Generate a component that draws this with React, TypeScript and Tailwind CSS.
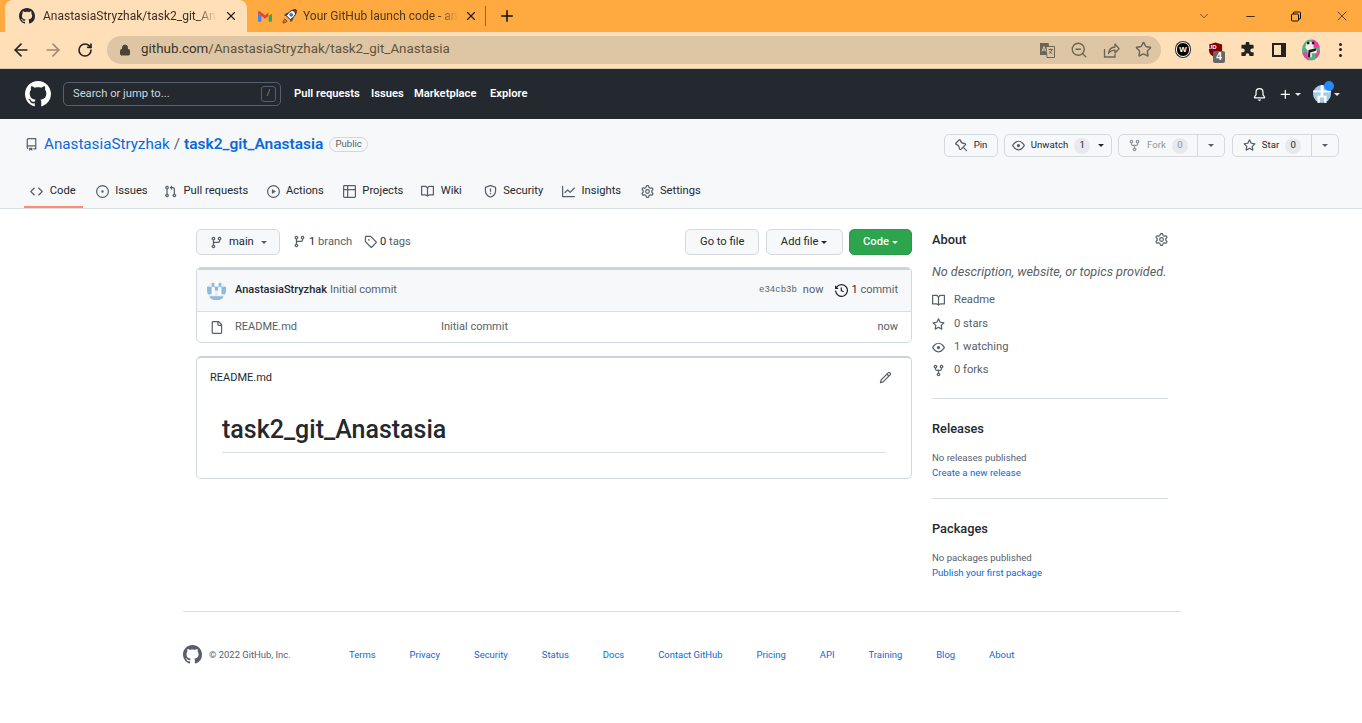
import { ArrowLeft, ArrowRight, RotateCw, Lock, ZoomOut, Star, ChevronDown, Minus, X, Plus } from "lucide-react";

const P: Record<string, string> = {
  github: "M8 0C3.58 0 0 3.58 0 8c0 3.54 2.29 6.53 5.47 7.59.4.07.55-.17.55-.38 0-.19-.01-.82-.01-1.49-2.01.37-2.53-.49-2.69-.94-.09-.23-.48-.94-.82-1.13-.28-.15-.68-.52-.01-.53.63-.01 1.08.58 1.23.82.72 1.21 1.87.87 2.33.66.07-.52.28-.87.51-1.07-1.78-.2-3.64-.89-3.64-3.95 0-.87.31-1.59.82-2.15-.08-.2-.36-1.02.08-2.12 0 0 .67-.21 2.2.82.64-.18 1.32-.27 2-.27.68 0 1.36.09 2 .27 1.53-1.04 2.2-.82 2.2-.82.44 1.1.16 1.92.08 2.12.51.56.82 1.27.82 2.15 0 3.07-1.87 3.75-3.65 3.95.29.25.54.73.54 1.48 0 1.07-.01 1.93-.01 2.2 0 .21.15.46.55.38A8.013 8.013 0 0016 8c0-4.42-3.58-8-8-8z",
  code: "m11.28 3.22 4.25 4.25a.75.75 0 0 1 0 1.06l-4.25 4.25a.749.749 0 0 1-1.275-.326.749.749 0 0 1 .215-.734L13.94 8l-3.72-3.72a.749.749 0 0 1 .326-1.275.749.749 0 0 1 .734.215Zm-6.56 0a.751.751 0 0 1 1.042.018.751.751 0 0 1 .018 1.042L2.06 8l3.72 3.72a.749.749 0 0 1-.326 1.275.749.749 0 0 1-.734-.215L.47 8.53a.75.75 0 0 1 0-1.06Z",
  issue: "M8 9.5a1.5 1.5 0 1 0 0-3 1.5 1.5 0 0 0 0 3ZM8 0a8 8 0 1 1 0 16A8 8 0 0 1 8 0ZM1.5 8a6.5 6.5 0 1 0 13 0 6.5 6.5 0 0 0-13 0Z",
  pull: "M1.5 3.25a2.25 2.25 0 1 1 3 2.122v5.256a2.251 2.251 0 1 1-1.5 0V5.372A2.25 2.25 0 0 1 1.5 3.25Zm5.677-.177L9.573.677A.25.25 0 0 1 10 .854V2.5h1A2.5 2.5 0 0 1 13.5 5v5.628a2.251 2.251 0 1 1-1.5 0V5a1 1 0 0 0-1-1h-1v1.646a.25.25 0 0 1-.427.177L7.177 3.427a.25.25 0 0 1 0-.354ZM3.75 2.5a.75.75 0 1 0 0 1.5.75.75 0 0 0 0-1.5Zm0 9.5a.75.75 0 1 0 0 1.5.75.75 0 0 0 0-1.5Zm8.25.75a.75.75 0 1 0 1.5 0 .75.75 0 0 0-1.5 0Z",
  play: "M8 0a8 8 0 1 1 0 16A8 8 0 0 1 8 0ZM1.5 8a6.5 6.5 0 1 0 13 0 6.5 6.5 0 0 0-13 0Zm4.879-2.773 4.264 2.559a.25.25 0 0 1 0 .428l-4.264 2.559A.25.25 0 0 1 6 10.559V5.442a.25.25 0 0 1 .379-.215Z",
  table: "M0 1.75C0 .784.784 0 1.75 0h12.5C15.216 0 16 .784 16 1.75v12.5A1.75 1.75 0 0 1 14.25 16H1.75A1.75 1.75 0 0 1 0 14.25ZM6.5 6.5v8h7.75a.25.25 0 0 0 .25-.25V6.5Zm8-1.5V1.75a.25.25 0 0 0-.25-.25H6.5V5Zm-13 1.5v7.75c0 .138.112.25.25.25H5v-8ZM5 5V1.5H1.75a.25.25 0 0 0-.25.25V5Z",
  book: "M0 1.75A.75.75 0 0 1 .75 1h4.253c1.227 0 2.317.59 3 1.501A3.743 3.743 0 0 1 11.006 1h4.245a.75.75 0 0 1 .75.75v10.5a.75.75 0 0 1-.75.75h-4.507a2.25 2.25 0 0 0-1.591.659l-.622.621a.75.75 0 0 1-1.06 0l-.622-.621A2.25 2.25 0 0 0 5.258 13H.75a.75.75 0 0 1-.75-.75Zm7.251 10.324.004-5.073-.002-2.253A2.25 2.25 0 0 0 5.003 2.5H1.5v9h3.757a3.75 3.75 0 0 1 1.994.574ZM8.755 4.75l-.004 7.322a3.752 3.752 0 0 1 1.992-.572H14.5v-9h-3.495a2.25 2.25 0 0 0-2.25 2.25Z",
  shield: "M7.467.133a1.748 1.748 0 0 1 1.066 0l5.25 1.68A1.75 1.75 0 0 1 15 3.48V7c0 1.566-.32 3.182-1.303 4.682-.983 1.498-2.585 2.813-5.032 3.855a1.697 1.697 0 0 1-1.33 0c-2.447-1.042-4.049-2.357-5.032-3.855C1.32 10.182 1 8.566 1 7V3.48a1.75 1.75 0 0 1 1.217-1.667Zm.61 1.429a.25.25 0 0 0-.153 0l-5.25 1.68a.25.25 0 0 0-.174.238V7c0 1.358.275 2.666 1.057 3.86.784 1.194 2.121 2.34 4.366 3.297a.196.196 0 0 0 .154 0c2.245-.956 3.582-2.104 4.366-3.298C13.225 9.666 13.5 8.36 13.5 7V3.48a.251.251 0 0 0-.174-.237l-5.25-1.68ZM8.75 4.75v3a.75.75 0 0 1-1.5 0v-3a.75.75 0 0 1 1.5 0ZM9 10.5a1 1 0 1 1-2 0 1 1 0 0 1 2 0Z",
  graph: "M1.5 1.75V13.5h13.75a.75.75 0 0 1 0 1.5H.75a.75.75 0 0 1-.75-.75V1.75a.75.75 0 0 1 1.5 0Zm14.28 2.53-5.25 5.25a.75.75 0 0 1-1.06 0L7 7.06 4.28 9.78a.751.751 0 0 1-1.042-.018.751.751 0 0 1-.018-1.042l3.25-3.25a.75.75 0 0 1 1.06 0L10 7.94l4.72-4.72a.751.751 0 0 1 1.042.018.751.751 0 0 1 .018 1.042Z",
  gear: "M8 0a8.2 8.2 0 0 1 .701.031C9.444.095 9.99.645 10.16 1.29l.288 1.107c.018.066.079.158.212.224.231.114.454.243.668.386.123.082.233.09.299.071l1.103-.303c.644-.176 1.392.021 1.82.63.27.385.506.792.704 1.218.315.675.111 1.422-.364 1.891l-.814.806c-.049.048-.098.147-.088.294.016.257.016.515 0 .772-.01.147.038.246.088.294l.814.806c.475.469.679 1.216.364 1.891a7.977 7.977 0 0 1-.704 1.217c-.428.61-1.176.807-1.82.63l-1.102-.302c-.067-.019-.177-.011-.3.071a5.909 5.909 0 0 1-.668.386c-.133.066-.194.158-.211.224l-.29 1.106c-.168.646-.715 1.196-1.458 1.26a8.006 8.006 0 0 1-1.402 0c-.743-.064-1.289-.614-1.458-1.26l-.289-1.106c-.018-.066-.079-.158-.212-.224a5.738 5.738 0 0 1-.668-.386c-.123-.082-.233-.09-.299-.071l-1.103.303c-.644.176-1.392-.021-1.82-.63a8.12 8.12 0 0 1-.704-1.218c-.315-.675-.111-1.422.363-1.891l.815-.806c.05-.048.098-.147.088-.294a6.214 6.214 0 0 1 0-.772c.01-.147-.038-.246-.088-.294l-.815-.806C.635 6.045.431 5.298.746 4.623a7.92 7.92 0 0 1 .704-1.217c.428-.61 1.176-.807 1.82-.63l1.102.302c.067.019.177.011.3-.071.214-.143.437-.272.668-.386.133-.066.194-.158.211-.224l.29-1.106C6.009.645 6.556.095 7.299.03 7.53.01 7.764 0 8 0Zm-.571 1.525c-.036.003-.108.036-.137.146l-.289 1.105c-.147.561-.549.967-.998 1.189-.173.086-.34.183-.5.29-.417.278-.97.423-1.529.27l-1.103-.303c-.109-.03-.175.016-.195.045-.22.312-.412.644-.573.99-.014.031-.021.11.059.19l.815.806c.411.406.562.957.53 1.456a4.709 4.709 0 0 0 0 .582c.032.499-.119 1.05-.53 1.456l-.815.806c-.081.08-.073.159-.059.19.162.346.353.677.573.989.02.03.085.076.195.046l1.102-.303c.56-.153 1.113-.008 1.53.27.161.107.328.204.501.29.447.222.85.629.997 1.189l.289 1.105c.029.109.101.143.137.146a6.6 6.6 0 0 0 1.142 0c.036-.003.108-.036.137-.146l.289-1.105c.147-.561.549-.967.998-1.189.173-.086.34-.183.5-.29.417-.278.97-.423 1.529-.27l1.103.303c.109.029.175-.016.195-.045.22-.313.411-.644.573-.99.014-.031.021-.11-.059-.19l-.815-.806c-.411-.406-.562-.957-.53-1.456a4.709 4.709 0 0 0 0-.582c-.032-.499.119-1.05.53-1.456l.815-.806c.081-.08.073-.159.059-.19a6.464 6.464 0 0 0-.573-.989c-.02-.03-.085-.076-.195-.046l-1.102.303c-.56.153-1.113.008-1.53-.27a4.44 4.44 0 0 0-.501-.29c-.447-.222-.85-.629-.997-1.189l-.289-1.105c-.029-.11-.101-.143-.137-.146a6.6 6.6 0 0 0-1.142 0ZM11 8a3 3 0 1 1-6 0 3 3 0 0 1 6 0ZM9.5 8a1.5 1.5 0 1 0-3.001.001A1.5 1.5 0 0 0 9.5 8Z",
  repo: "M2 2.5A2.5 2.5 0 0 1 4.5 0h8.75a.75.75 0 0 1 .75.75v12.5a.75.75 0 0 1-.75.75h-2.5a.75.75 0 0 1 0-1.5h1.75v-2h-8a1 1 0 0 0-.714 1.7.75.75 0 1 1-1.072 1.05A2.495 2.495 0 0 1 2 11.5Zm10.5-1h-8a1 1 0 0 0-1 1v6.708A2.486 2.486 0 0 1 4.5 9h8ZM5 12.25a.25.25 0 0 1 .25-.25h3.5a.25.25 0 0 1 .25.25v3.25a.25.25 0 0 1-.4.2l-1.45-1.087a.249.249 0 0 0-.3 0L5.4 15.7a.25.25 0 0 1-.4-.2Z",
  pin: "M4.456.734a1.75 1.75 0 012.826.504l.613 1.327a3.081 3.081 0 002.084 1.707l2.454.584c1.332.317 1.8 1.972.832 2.94L11.06 10l3.72 3.72a.75.75 0 11-1.061 1.06L10 11.06l-2.204 2.205c-.968.968-2.623.5-2.94-.832l-.584-2.454a3.081 3.081 0 00-1.707-2.084l-1.327-.613a1.75 1.75 0 01-.504-2.826L4.456.734zM5.92 1.866a.25.25 0 00-.404-.072L1.794 5.516a.25.25 0 00.072.404l1.328.613A4.582 4.582 0 015.73 9.63l.584 2.454a.25.25 0 00.42.12l5.47-5.47a.25.25 0 00-.12-.42L9.63 6.13a4.581 4.581 0 01-3.098-2.537L5.92 1.866z",
  eye: "M8 2c1.981 0 3.671.992 4.933 2.078 1.27 1.091 2.187 2.345 2.637 3.023a1.62 1.62 0 0 1 0 1.798c-.45.678-1.367 1.932-2.637 3.023C11.67 13.008 9.981 14 8 14c-1.981 0-3.671-.992-4.933-2.078C1.797 10.83.88 9.576.43 8.898a1.62 1.62 0 0 1 0-1.798c.45-.677 1.367-1.931 2.637-3.022C4.33 2.992 6.019 2 8 2ZM1.679 7.932a.12.12 0 0 0 0 .136c.411.622 1.241 1.75 2.366 2.717C5.176 11.758 6.527 12.5 8 12.5c1.473 0 2.825-.742 3.955-1.715 1.124-.967 1.954-2.096 2.366-2.717a.12.12 0 0 0 0-.136c-.412-.621-1.242-1.75-2.366-2.717C10.824 4.242 9.473 3.5 8 3.5c-1.473 0-2.825.742-3.955 1.715-1.124.967-1.954 2.096-2.366 2.717ZM8 10a2 2 0 1 1-.001-3.999A2 2 0 0 1 8 10Z",
  fork: "M5 5.372v.878c0 .414.336.75.75.75h4.5a.75.75 0 0 0 .75-.75v-.878a2.25 2.25 0 1 1 1.5 0v.878a2.25 2.25 0 0 1-2.25 2.25h-1.5v2.128a2.251 2.251 0 1 1-1.5 0V8.5h-1.5A2.25 2.25 0 0 1 3.5 6.25v-.878a2.25 2.25 0 1 1 1.5 0ZM5 3.25a.75.75 0 1 0-1.5 0 .75.75 0 0 0 1.5 0Zm6.75.75a.75.75 0 1 0 0-1.5.75.75 0 0 0 0 1.5Zm-3 8.75a.75.75 0 1 0-1.5 0 .75.75 0 0 0 1.5 0Z",
  star: "M8 .25a.75.75 0 0 1 .673.418l1.882 3.815 4.21.612a.75.75 0 0 1 .416 1.279l-3.046 2.97.719 4.192a.751.751 0 0 1-1.088.791L8 12.347l-3.766 1.98a.75.75 0 0 1-1.088-.79l.72-4.194L.818 6.374a.75.75 0 0 1 .416-1.28l4.21-.611L7.327.668A.75.75 0 0 1 8 .25Zm0 2.445L6.615 5.5a.75.75 0 0 1-.564.41l-3.097.45 2.24 2.184a.75.75 0 0 1 .216.664l-.528 3.084 2.769-1.456a.75.75 0 0 1 .698 0l2.77 1.456-.53-3.084a.75.75 0 0 1 .216-.664l2.24-2.183-3.096-.45a.75.75 0 0 1-.564-.41L8 2.694Z",
  branch: "M9.5 3.25a2.25 2.25 0 1 1 3 2.122V6A2.5 2.5 0 0 1 10 8.5H6a1 1 0 0 0-1 1v1.128a2.251 2.251 0 1 1-1.5 0V5.372a2.25 2.25 0 1 1 1.5 0v1.836A2.493 2.493 0 0 1 6 7h4a1 1 0 0 0 1-1v-.628A2.25 2.25 0 0 1 9.5 3.25Zm-6 0a.75.75 0 1 0 1.5 0 .75.75 0 0 0-1.5 0Zm8.25-.75a.75.75 0 1 0 0 1.5.75.75 0 0 0 0-1.5ZM4.25 12a.75.75 0 1 0 0 1.5.75.75 0 0 0 0-1.5Z",
  tag: "M1 7.775V2.75C1 1.784 1.784 1 2.75 1h5.025c.464 0 .91.184 1.238.513l6.25 6.25a1.75 1.75 0 0 1 0 2.474l-5.026 5.026a1.75 1.75 0 0 1-2.474 0l-6.25-6.25A1.752 1.752 0 0 1 1 7.775Zm1.5 0c0 .066.026.13.073.177l6.25 6.25a.25.25 0 0 0 .354 0l5.025-5.025a.25.25 0 0 0 0-.354l-6.25-6.25a.25.25 0 0 0-.177-.073H2.75a.25.25 0 0 0-.25.25ZM6 5a1 1 0 1 1 0 2 1 1 0 0 1 0-2Z",
  history: "m.427 1.927 1.215 1.215a8.002 8.002 0 1 1-1.6 5.685.75.75 0 1 1 1.493-.154 6.5 6.5 0 1 0 1.18-4.458l1.358 1.358A.25.25 0 0 1 3.896 6H.25A.25.25 0 0 1 0 5.75V2.104a.25.25 0 0 1 .427-.177ZM7.75 4a.75.75 0 0 1 .75.75v2.992l2.028.812a.75.75 0 0 1-.557 1.392l-2.5-1A.751.751 0 0 1 7 8.25v-3.5A.75.75 0 0 1 7.75 4Z",
  file: "M2 1.75C2 .784 2.784 0 3.75 0h6.586c.464 0 .909.184 1.237.513l2.914 2.914c.329.328.513.773.513 1.237v9.586A1.75 1.75 0 0 1 13.25 16h-9.5A1.75 1.75 0 0 1 2 14.25Zm1.75-.25a.25.25 0 0 0-.25.25v12.5c0 .138.112.25.25.25h9.5a.25.25 0 0 0 .25-.25V6h-2.75A1.75 1.75 0 0 1 9 4.25V1.5Zm6.75.062V4.25c0 .138.112.25.25.25h2.688l-.011-.013-2.914-2.914-.013-.011Z",
  pencil: "M11.013 1.427a1.75 1.75 0 0 1 2.474 0l1.086 1.086a1.75 1.75 0 0 1 0 2.474l-8.61 8.61c-.21.21-.47.364-.756.445l-3.251.93a.75.75 0 0 1-.927-.928l.929-3.25c.081-.286.235-.547.445-.758l8.61-8.61Zm.176 4.823L9.75 4.81l-6.286 6.287a.253.253 0 0 0-.064.108l-.558 1.953 1.953-.558a.253.253 0 0 0 .108-.064Zm1.238-3.763a.25.25 0 0 0-.354 0L10.811 3.75l1.439 1.44 1.263-1.263a.25.25 0 0 0 0-.354Z",
  bell: "M8 16a2 2 0 0 0 1.985-1.75c.017-.137-.097-.25-.235-.25h-3.5c-.138 0-.252.113-.235.25A2 2 0 0 0 8 16ZM3 5a5 5 0 0 1 10 0v2.947c0 .05.015.098.042.139l1.703 2.555A1.519 1.519 0 0 1 13.482 13H2.518a1.516 1.516 0 0 1-1.263-2.36l1.703-2.554A.255.255 0 0 0 3 7.947Zm5-3.5A3.5 3.5 0 0 0 4.5 5v2.947c0 .346-.102.683-.294.97l-1.703 2.556a.017.017 0 0 0-.003.01l.001.006c0 .002.002.004.004.006l.006.004.007.001h10.964l.007-.001.006-.004.004-.006.001-.007a.017.017 0 0 0-.003-.01l-1.703-2.554a1.745 1.745 0 0 1-.294-.97V5A3.5 3.5 0 0 0 8 1.5Z",
  plus: "M7.75 2a.75.75 0 0 1 .75.75V7h4.25a.75.75 0 0 1 0 1.5H8.5v4.25a.75.75 0 0 1-1.5 0V8.5H2.75a.75.75 0 0 1 0-1.5H7V2.75A.75.75 0 0 1 7.75 2Z",
};

function Oct({ name, className = "w-[13px] h-[13px]" }: { name: string; className?: string }) {
  return (
    <svg viewBox="0 0 16 16" fill="currentColor" fillRule="evenodd" className={`shrink-0 ${className}`}>
      <path d={P[name]} />
    </svg>
  );
}

function Caret({ className = "" }: { className?: string }) {
  return <span className={`inline-block w-0 h-0 border-x-[3.2px] border-x-transparent border-t-[3.2px] border-t-current ${className}`} />;
}

// commit avatar
function Identicon({ className }: { className: string }) {
  return (
    <svg viewBox="0 0 20 20" className={className}>
      <circle cx="10" cy="10" r="10" fill="#e8eff5" />
      <path fill="#8dbbdf" d="M0 6h5v8H1A10 10 0 0 1 0 10ZM15 6h5v4a10 10 0 0 1-1 4h-4ZM5 2h3v4H5ZM12 2h3v4h-3ZM8 6h4v4H8ZM3 16h14v1.500A10 10 0 0 1 3 17.500Z" />
      <path fill="#ffffff" d="M8 0h4v5H8ZM5 7h3v8H5ZM12 7h3v8h-3Z" />
    </svg>
  );
}

function UserAvatar() {
  return (
    <svg viewBox="0 0 20 20" className="w-[18px] h-[18px]">
      <circle cx="10" cy="10" r="10" fill="#a5cdea" />
      <path fill="#ffffff" d="M8.500 0h3v6H20v2h-8.500v4H15v8h-2.500v-6h-5v6H5v-8h3.500V8H0V6h8.500Z" />
    </svg>
  );
}

function GmailIcon() {
  return (
    <svg viewBox="0 0 16 12" className="w-[14px] h-[11px] shrink-0">
      <path fill="#4285f4" d="M0 2.500V11a1 1 0 0 0 1 1h2.800V5Z" />
      <path fill="#34a853" d="M16 2.500V11a1 1 0 0 1-1 1h-2.800V5Z" />
      <path fill="#ea4335" d="M3.800 5.200 0 2.500V1.500C0 .2 1.400-.4 2.400.3L8 4.700 12.200 1.500V5.200L8 8.500Z" />
      <path fill="#fbbc04" d="M12.200 1.500 13.600.3C14.600-.4 16 .2 16 1.500v1L12.200 5.200Z" />
    </svg>
  );
}

function RocketIcon() {
  return (
    <svg viewBox="0 0 16 16" className="w-[15px] h-[15px] shrink-0">
      <path fill="#d9791a" stroke="#4a2a10" strokeWidth="0.6" d="M1 15c0-2 .7-3.500 2-4.500l2.500 2.500C4.500 14.300 3 15 1 15Z" />
      <path fill="#ffffff" stroke="#111" strokeWidth="1" d="M15 1c.3 3.500-1 6.500-3.800 8.600L9 11.500 4.500 7l1.900-2.200C8.500 2 11.500.7 15 1Z" />
      <path fill="#e03131" stroke="#111" strokeWidth="0.6" d="M15 1c.1 1.300 0 2.500-.4 3.600L11.400 1.400C12.500 1 13.700.9 15 1Z" />
      <circle cx="9.800" cy="6.200" r="1.600" fill="#2f9be8" stroke="#111" strokeWidth="0.5" />
      <path fill="#2f6fc4" stroke="#111" strokeWidth="0.5" d="M4.500 7 2.500 6.500 5 4.500h1.500ZM9 11.500l.5 2 2-2.500v-1.500Z" />
    </svg>
  );
}

function Tabstrip() {
  return (
    <div className="h-8 bg-[#ffaa40] flex items-stretch text-[12px] text-[#3b2f20]">
      <div className="ml-[5px] w-[242px] bg-[#ffdfb8] rounded-t-lg flex items-center pl-[14px] pr-[9px]">
        <Oct name="github" className="w-[16px] h-[16px] text-[#24292f]" />
        <span className="ml-[8px] w-[174px] overflow-hidden whitespace-nowrap [mask-image:linear-gradient(to_right,black_88%,transparent)]">AnastasiaStryzhak/task2_git_Anastasia</span>
        <X className="ml-auto w-[14px] h-[14px] text-[#222]" strokeWidth={2} />
      </div>
      <div className="w-[239px] flex items-center pl-[11px]">
        <GmailIcon />
        <span className="ml-[10px]"><RocketIcon /></span>
        <span className="ml-[6px] w-[155px] overflow-hidden whitespace-nowrap text-[#4a3a20] [mask-image:linear-gradient(to_right,black_88%,transparent)]">Your GitHub launch code - and more</span>
        <X className="ml-[6px] w-[14px] h-[14px] text-[#222]" strokeWidth={2} />
        <div className="ml-auto w-px h-[20px] bg-[#8a6a30]" />
      </div>
      <div className="ml-[12px] flex items-center">
        <Plus className="w-[18px] h-[18px] text-[#111]" strokeWidth={2} />
      </div>
      <div className="ml-auto flex items-center text-[#111]">
        <span className="w-[46px] flex justify-center"><ChevronDown className="w-[14px] h-[14px]" strokeWidth={1} /></span>
        <span className="w-[46px] flex justify-center"><Minus className="w-[13px] h-[13px]" strokeWidth={1.5} /></span>
        <span className="w-[46px] flex justify-center">
          <svg viewBox="0 0 10 10" className="w-[10px] h-[11px]" fill="none" stroke="#111" strokeWidth="1">
            <rect x="0.5" y="2.500" width="7" height="7" rx="1" />
            <path d="M2.500 2.500V1.300a.8.8 0 0 1 .8-.8H8.700a.8.8 0 0 1 .8.8V7a.5.5 0 0 1-.5.5H7.500" />
          </svg>
        </span>
        <span className="w-[43px] flex justify-center pl-[3px]"><X className="w-[16px] h-[16px]" strokeWidth={1} /></span>
      </div>
    </div>
  );
}

function Toolbar() {
  return (
    <div className="h-[37px] bg-[#ffdfb8] border-b border-[#d8c3a5] flex items-center pb-[1px]">
      <div className="w-[107px] flex items-center pl-[11px] gap-[12px]">
        <ArrowLeft className="w-[20px] h-[20px] text-[#222]" strokeWidth={2} />
        <ArrowRight className="w-[20px] h-[20px] text-[#9c8a75]" strokeWidth={2} />
        <span className="w-[20px] flex justify-center"><RotateCw className="w-[16px] h-[16px] text-[#222]" strokeWidth={2.4} /></span>
      </div>
      <div className="w-[1054px] h-[28px] rounded-full bg-[#dec6a4] flex items-center pl-[12px] pr-[9px]">
        <Lock className="w-[12px] h-[12px] text-[#4b4438] fill-[#4b4438]" strokeWidth={2} />
        <span className="ml-[10px] text-[13.4px] text-[#3b3327] whitespace-nowrap">github.com<span className="text-[#5f5340]">/AnastasiaStryzhak/task2_git_Anastasia</span></span>
        <div className="ml-auto flex items-center gap-[14px] text-[#6b6458]">
          <svg viewBox="0 0 18 18" className="w-[18px] h-[18px]">
            <path fill="#6b6458" d="M2 2h8.500l.5 2v10H2Z" />
            <path fill="#dec6a4" stroke="#6b6458" strokeWidth="1" d="M8 5.500h8.500v11H9Z" />
            <path fill="none" stroke="#6b6458" strokeWidth="1" d="M10.500 8.500h4.500M12.700 7.500v1M14 8.500c-.5 2-2 3.500-3 4M11.500 10c.5 1 2 2.500 3 3" />
            <path fill="none" stroke="#dec6a4" strokeWidth="1" d="M4 10.500l2-5 2 5M4.700 9h2.600" />
          </svg>
          <ZoomOut className="w-[18px] h-[18px]" strokeWidth={1.8} />
          <svg viewBox="0 0 18 18" className="w-[18px] h-[18px]" fill="none" stroke="#6b6458" strokeWidth="1.300">
            <path d="M2.500 8v8h10.500v-3" />
            <path strokeLinejoin="round" d="M6.500 12.500c.4-4 3-6.300 6.500-6.500V3l4 4.700-4 4.300V9.200c-3 0-5 1-6.500 3.300Z" />
          </svg>
          <span className="w-[18px] flex justify-center"><Star className="w-[17px] h-[17px]" strokeWidth={2} /></span>
        </div>
      </div>
      <div className="ml-[13px] flex items-center gap-[14px]">
        <span className="w-[18px] h-[18px] flex items-center justify-center">
          <span className="w-[14px] h-[15px] rounded-full bg-black border border-white ring-1 ring-[#333] flex items-center justify-center text-white text-[8px] font-bold font-['Liberation_Sans',sans-serif]">W</span>
        </span>
        <span className="w-[18px] h-[18px] relative flex items-center justify-center">
          <svg viewBox="0 0 16 16" className="w-[15px] h-[16px]"><path fill="#800000" d="M8 0l7 2v6c0 4-3 6.500-7 8-4-1.500-7-4-7-8V2Z" /></svg>
          <span className="absolute left-[2px] top-[3px] text-[6px] leading-none text-white font-bold font-['Liberation_Sans',sans-serif]">UD</span>
          <span className="absolute left-[7px] top-[10px] w-[12px] h-[12px] bg-[#666] rounded-[2px] text-white text-[10px] leading-[12px] text-center font-bold font-['Liberation_Sans',sans-serif]">4</span>
        </span>
        <svg viewBox="0 0 16 16" className="w-[15px] h-[15px] mx-[1.500px]"><path fill="#222" d="M6 1.500a2 2 0 0 1 4 0V3h3.500a1 1 0 0 1 1 1v3H13a2 2 0 0 0 0 4h1.500v3a1 1 0 0 1-1 1H10v-1a2 2 0 0 0-4 0v1H2.500a1 1 0 0 1-1-1v-3H3a2 2 0 0 0 0-4H1.500V4a1 1 0 0 1 1-1H6Z" /></svg>
        <span className="w-[18px] h-[18px] flex items-center justify-center">
          <span className="w-[14px] h-[14px] bg-[#222] flex justify-start p-[2px]"><span className="w-[7px] h-full bg-[#ffdfb8]" /></span>
        </span>
        <svg viewBox="0 0 22 26" className="w-[18px] h-[22px]">
          <defs><clipPath id="pc"><ellipse cx="11" cy="13" rx="11" ry="13" /></clipPath></defs>
          <g clipPath="url(#pc)">
            <rect width="22" height="26" fill="#4fb286" />
            <path fill="#ee3fa0" d="M12 0h10v10H14ZM16 14h6v8h-6ZM0 16h8v10H0Z" />
            <path fill="#f3efe6" d="M6 3h8v7l4 3v4H12v5H7v-8L4 10Z" />
            <path fill="#1c1c1c" d="M6 3h3v3H6ZM12 3h3v3h-3ZM8 13l9-2v3l-7 2v6H7Z" />
          </g>
        </svg>
        <span className="w-[16px] -ml-[2px] flex flex-col items-center gap-[2.500px]">
          <span className="w-[3px] h-[3px] rounded-full bg-[#222]" />
          <span className="w-[3px] h-[3px] rounded-full bg-[#222]" />
          <span className="w-[3px] h-[3px] rounded-full bg-[#222]" />
        </span>
      </div>
    </div>
  );
}

function GhHeader() {
  return (
    <div className="h-[50px] bg-[#24292f] flex items-center text-white pl-[25px] text-[11.2px] font-semibold">
      <Oct name="github" className="w-[26px] h-[26px]" />
      <div className="ml-[12px] w-[218px] h-[24px] border border-[#57606a] rounded-[5px] flex items-center pl-[9px] pr-[4px] text-[#d0d7de] font-normal">
        <span className="pt-px">Search or jump to...</span>
        <span className="ml-auto w-[15px] h-[16px] border border-[#57606a] rounded-[3px] text-[9px] text-[#8b949e] flex items-center justify-center">/</span>
      </div>
      <nav className="ml-[13px] flex pt-px">
        <span className="w-[77px]">Pull requests</span>
        <span className="w-[43px]">Issues</span>
        <span className="w-[76px]">Marketplace</span>
        <span>Explore</span>
      </nav>
      <div className="ml-auto flex items-center pr-[22px]">
        <Oct name="bell" className="w-[13px] h-[13px]" />
        <Oct name="plus" className="ml-[13px] w-[13px] h-[13px]" />
        <Caret className="ml-[3px] text-[#e6e6e6]" />
        <div className="ml-[12px] relative w-[18px] h-[18px]">
          <UserAvatar />
          <span className="absolute -top-[4px] left-[11px] w-[10px] h-[10px] rounded-full bg-[#218bff]" />
        </div>
        <Caret className="ml-[3px] text-[#e6e6e6]" />
      </div>
    </div>
  );
}

function ActionBtn({ icon, label, count, muted, w, split }: { icon: string; label: string; count?: string; muted?: boolean; w: string; split?: boolean }) {
  return (
    <div className={`h-[23px] flex items-center bg-[#f6f8fa] border border-[#d5d9dd] rounded-[5px] text-[9.6px] ${w} ${muted ? "text-[#8c959f]" : "text-[#24292f]"}`}>
      <div className="flex-1 flex items-center justify-center gap-[6px] h-full">
        <Oct name={icon} className={`w-[13px] h-[13px] ${muted ? "text-[#8c959f]" : "text-[#57606a]"}`} />
        <span className="flex items-center">{label}</span>
        {count && <span className={`w-[16px] h-[16px] rounded-full bg-[#e7e9ec] flex items-center justify-center ${muted ? "text-[#8c959f]" : ""}`}>{count}</span>}
        {label === "Unwatch" && <Caret className="ml-[2px]" />}
      </div>
      {split && (
        <div className="w-[27px] h-full border-l border-[#d5d9dd] flex items-center justify-center text-[#57606a]">
          <Caret />
        </div>
      )}
    </div>
  );
}

const tabs = [
  { icon: "code", label: "Code", w: "w-[59px]" },
  { icon: "issue", label: "Issues", w: "w-[62px]" },
  { icon: "pull", label: "Pull requests", w: "w-[96px]" },
  { icon: "play", label: "Actions", w: "w-[70px]" },
  { icon: "table", label: "Projects", w: "w-[72px]" },
  { icon: "book", label: "Wiki", w: "w-[56px]" },
  { icon: "shield", label: "Security", w: "w-[72px]" },
  { icon: "graph", label: "Insights", w: "w-[72px]" },
  { icon: "gear", label: "Settings", w: "w-[74px]" },
];

function RepoHead() {
  return (
    <div className="h-[90px] bg-[#f6f8fa] border-b border-[#d8dee4] flex flex-col">
      <div className="h-[71px] flex pl-[25px] pr-[23px] pt-[15px] items-start">
        <div className="flex items-center h-[21px] whitespace-nowrap">
          <Oct name="repo" className="w-[13px] h-[13px] text-[#57606a]" />
          <span className="ml-[6px] text-[15.2px] text-[#0969da]">AnastasiaStryzhak</span>
          <span className="mx-[4px] text-[15.2px] text-[#57606a]">/</span>
          <span className="text-[15.500px] font-semibold text-[#0969da]">task2_git_Anastasia</span>
          <span className="ml-[6px] h-[15px] px-[5px] border border-[#d0d7de] rounded-full text-[9.6px] text-[#57606a] flex items-center">Public</span>
        </div>
        <div className="ml-auto flex gap-[6px]">
          <ActionBtn icon="pin" label="Pin" w="w-[54px]" />
          <ActionBtn icon="eye" label="Unwatch" count="1" w="w-[108px]" />
          <ActionBtn icon="fork" label="Fork" count="0" muted split w="w-[107px]" />
          <ActionBtn icon="star" label="Star" count="0" split w="w-[107px] ml-px" />
        </div>
      </div>
      <nav className="flex-1 flex pl-[24px] gap-[6.4px] text-[11.2px] text-[#24292f]">
        {tabs.map((t, i) => (
          <div key={t.label} className={`flex items-center gap-[6.4px] pl-[6.4px] h-[37px] -mt-[1px] pt-[5px] whitespace-nowrap border-b-2 ${t.w} ${i === 0 ? "border-[#fd8c73]" : "border-transparent"}`}>
            <Oct name={t.icon} className="w-[13px] h-[13px] text-[#57606a]" />
            {t.label}
          </div>
        ))}
      </nav>
    </div>
  );
}

function GrayBtn({ children, w }: { children: React.ReactNode; w: string }) {
  return (
    <div className={`h-[26px] ${w} flex items-center justify-center gap-[3px] bg-[#f6f8fa] border border-[#d5d9dd] rounded-[5px] text-[11.2px] text-[#24292f]`}>
      {children}
    </div>
  );
}

function FileArea() {
  return (
    <div className="w-[716px]">
      <div className="flex items-center h-[26px] text-[11.2px]">
        <div className="w-[84px] h-[26px] flex items-center pl-[13px] bg-[#f6f8fa] border border-[#d5d9dd] rounded-[5px] text-[#24292f]">
          <Oct name="branch" className="w-[13px] h-[13px] text-[#57606a]" />
          <span className="ml-[6px]">main</span>
          <Caret className="ml-[7px] text-[#57606a]" />
        </div>
        <div className="ml-[13px] w-[71px] flex items-center text-[#57606a]">
          <Oct name="branch" className="w-[13px] h-[13px]" />
          <span className="ml-[3px]"><b className="font-normal text-[#24292f]">1</b> branch</span>
        </div>
        <div className="flex items-center text-[#57606a]">
          <Oct name="tag" className="w-[13px] h-[13px]" />
          <span className="ml-[3px]"><b className="font-normal text-[#24292f]">0</b> tags</span>
        </div>
        <div className="ml-auto flex gap-[6.400px]">
          <GrayBtn w="w-[74px]">Go to file</GrayBtn>
          <GrayBtn w="w-[77px]">Add file<Caret /></GrayBtn>
          <div className="h-[26px] w-[63px] flex items-center justify-center gap-[3px] bg-[#2da44e] border border-[#2a9a49] rounded-[5px] text-[11.2px] font-medium text-white">
            Code<Caret />
          </div>
        </div>
      </div>

      <div className="mt-[12px] border border-[#d0d7de] rounded-[5px] overflow-hidden text-[11px]">
        <div className="h-[44px] bg-[#f6f8fa] border-b border-[#d8dee4] flex items-center pl-[10px] pr-[13px] border-t-2 border-t-[#ccd3dc]">
          <Identicon className="w-[19px] h-[19px]" />
          <span className="ml-[9px] font-medium text-[#24292f]">AnastasiaStryzhak</span>
          <span className="ml-[3px] text-[#57606a]">Initial commit</span>
          <span className="ml-auto font-['Liberation_Mono',monospace] text-[9px] text-[#57606a]">e34cb3b</span>
          <span className="ml-[6px] text-[#57606a]">now</span>
          <Oct name="history" className="ml-[12px] w-[13px] h-[13px] text-[#24292f]" />
          <span className="ml-[3px] text-[#57606a]"><b className="font-normal text-[#24292f]">1</b> commit</span>
        </div>
        <div className="h-[30px] flex items-center pl-[13px] pr-[13px] text-[#57606a]">
          <Oct name="file" className="w-[13px] h-[13px]" />
          <span className="ml-[12px] w-[206px] pt-px">README.md</span>
          <span className="pt-px">Initial commit</span>
          <span className="ml-auto pt-px">now</span>
        </div>
      </div>

      <div className="mt-[13px] h-[123px] border border-[#d0d7de] border-t-2 border-t-[#ccd3dc] rounded-[5px]">
        <div className="h-[41px] flex items-center pl-[13px] pr-[19px] text-[11px] text-[#24292f] -mt-px">
          <span className="pt-px">README.md</span>
          <Oct name="pencil" className="ml-auto w-[13px] h-[13px] text-[#57606a]" />
        </div>
        <div className="mx-[25px] mt-[16px]">
          <h1 className="text-[25px] leading-[32px] font-medium text-[#24292f] border-b border-[#d8dee4] pb-[6px]">task2_git_Anastasia</h1>
        </div>
      </div>
    </div>
  );
}

function Sidebar() {
  const items = [
    { icon: "book", label: "Readme", h: "h-[24px]" },
    { icon: "star", label: "0 stars", h: "h-[24px]" },
    { icon: "eye", label: "1 watching", h: "h-[22px]" },
    { icon: "fork", label: "0 forks", h: "h-[24px]" },
  ];
  return (
    <div className="w-[236px] ml-[20px] pt-px">
      <div className="flex items-center h-[20px]">
        <h2 className="text-[12.8px] font-medium text-[#24292f]">About</h2>
        <Oct name="gear" className="ml-auto w-[13px] h-[13px] text-[#57606a] -mt-[2px]" />
      </div>
      <p className="mt-[13px] text-[12.650px] leading-[16px] italic text-[#57606a] whitespace-nowrap pt-px -mb-px">No description, website, or topics provided.</p>
      <div className="mt-[9px] text-[11.2px] text-[#57606a]">
        {items.map((it) => (
          <div key={it.label} className={`flex items-center ${it.h}`}>
            <Oct name={it.icon} className="w-[13px] h-[13px]" />
            <span className="ml-[9px] pt-px">{it.label}</span>
          </div>
        ))}
      </div>
      <div className="mt-[16px] border-t border-[#d8dee4] pt-[21px]">
        <h2 className="text-[12.8px] leading-[18px] font-medium text-[#24292f]">Releases</h2>
        <p className="mt-[12px] text-[9.6px] leading-[15px] text-[#57606a]">No releases published</p>
        <p className="text-[9.6px] leading-[15px] text-[#0969da]">Create a new release</p>
      </div>
      <div className="mt-[18px] border-t border-[#d8dee4] pt-[21px]">
        <h2 className="text-[12.8px] leading-[18px] font-medium text-[#24292f]">Packages</h2>
        <p className="mt-[12px] text-[9.6px] leading-[15px] text-[#57606a]">No packages published</p>
        <p className="text-[9.6px] leading-[15px] text-[#0969da]">Publish your first package</p>
      </div>
    </div>
  );
}

function Footer() {
  const links = ["Terms", "Privacy", "Security", "Status", "Docs", "Contact GitHub", "Pricing", "API", "Training", "Blog", "About"];
  return (
    <div className="ml-[183px] mr-[181px] mt-[31px] border-t border-[#d8dee4] pt-[33px] flex items-center text-[9.450px]">
      <Oct name="github" className="w-[19px] h-[19px] text-[#57606a]" />
      <span className="ml-[7px] w-[140px] text-[#57606a] pt-[2px]">© 2022 GitHub, Inc.</span>
      <div className="flex gap-[34px] text-[#0969da] pt-[2px]">
        {links.map((l) => <span key={l}>{l}</span>)}
      </div>
    </div>
  );
}

export default function App() {
  return (
    <div className="w-full h-[723px] overflow-hidden bg-white font-['Roboto',sans-serif]">
      <Tabstrip />
      <Toolbar />
      <GhHeader />
      <RepoHead />
      <div className="flex pl-[196px] pt-[20px]">
        <FileArea />
        <Sidebar />
      </div>
      <Footer />
    </div>
  );
}
